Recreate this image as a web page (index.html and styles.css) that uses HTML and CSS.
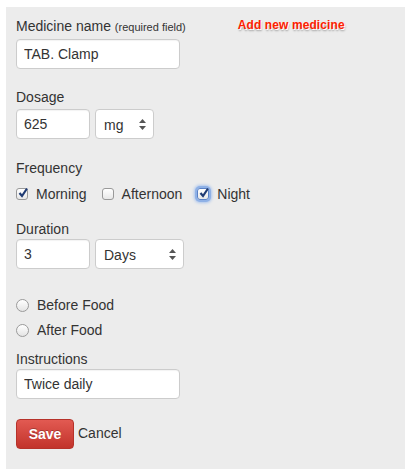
FILE: index.html
```html
<!DOCTYPE html>
<html lang="en">
<head>
    <meta charset="UTF-8">
    <meta name="viewport" content="width=device-width, initial-scale=1.0">
    <link rel="stylesheet" href="styles.css">
</head>
<body>
    <div class="panel">
        <div class="head-row">
            <label class="label" for="name">Medicine name <small>(required field)</small></label>
            <a class="add-link" href="#">Add new medicine</a>
        </div>
        <input type="text" id="name" class="field wide" value="TAB. Clamp">

        <label class="label gap" for="dose">Dosage</label>
        <div class="inline">
            <input type="text" id="dose" class="field short" value="625">
            <div class="select unit">mg<svg width="7" height="11" viewBox="0 0 7 11"><path d="M3.5 0 L7 4 H0 Z M3.5 11 L0 7 H7 Z" fill="#555"/></svg></div>
        </div>

        <div class="label gap-freq">Frequency</div>
        <div class="checks">
            <span class="check on"><span class="box"><svg width="12" height="12" viewBox="0 0 12 12"><path d="M2.5 6 L5 9 L10 1.5" stroke="#1f3b73" stroke-width="2.2" fill="none"/></svg></span>Morning</span>
            <span class="check"><span class="box"></span>Afternoon</span>
            <span class="check on focus"><span class="box"><svg width="12" height="12" viewBox="0 0 12 12"><path d="M2.5 6 L5 9 L10 1.5" stroke="#1f3b73" stroke-width="2.2" fill="none"/></svg></span>Night</span>
        </div>

        <label class="label gap-dur" for="dur">Duration</label>
        <div class="inline">
            <input type="text" id="dur" class="field short" value="3">
            <div class="select period">Days<svg width="7" height="11" viewBox="0 0 7 11"><path d="M3.5 0 L7 4 H0 Z M3.5 11 L0 7 H7 Z" fill="#555"/></svg></div>
        </div>

        <div class="radios">
            <span class="radio"><span class="dot"></span>Before Food</span>
            <span class="radio"><span class="dot"></span>After Food</span>
        </div>

        <label class="label tight" for="instr">Instructions</label>
        <input type="text" id="instr" class="field wide" value="Twice daily">

        <div class="actions">
            <button class="save">Save</button>
            <a class="cancel" href="#">Cancel</a>
        </div>
    </div>
</body>
</html>
```

FILE: styles.css
```css
body {
    margin: 0;
    background: #fff;
    font-family: 'Helvetica Neue', 'Liberation Sans', Arial, sans-serif;
    color: #333;
}
.panel {
    margin: 7px 0 0 6px;
    width: 389px;
    height: 453px;
    padding: 9px 0 0 10px;
    background: #ececec;
}
.head-row {
    display: flex;
    align-items: flex-start;
}
.label {
    display: block;
    font-size: 14px;
    line-height: 20px;
    margin-bottom: 2px;
}
.label small {
    font-size: 11px;
}
.gap {
    margin-top: 18px;
}
.gap-freq {
    margin-top: 19px;
    margin-bottom: 6px;
}
.gap-dur {
    margin-top: 15px;
    margin-bottom: 0;
}
.tight {
    margin-top: 9px;
    margin-bottom: 0;
}
.add-link {
    margin-left: 52px;
    margin-top: 2px;
    font-size: 12px;
    font-weight: bold;
    letter-spacing: 0.1px;
    color: #ff2200;
    text-decoration: none;
    text-shadow: 1px 1px 0 #fff, 1px 2px 2px rgba(0, 0, 0, 0.35);
}
.field {
    display: block;
    box-sizing: border-box;
    height: 30px;
    padding: 0 7px;
    border: 1px solid #ccc;
    border-radius: 4px;
    background: #fff;
    font-family: inherit;
    font-size: 14px;
    color: #333;
    box-shadow: inset 0 1px 1px rgba(0, 0, 0, 0.05);
}
.wide {
    width: 164px;
}
.short {
    width: 74px;
}
.inline {
    display: flex;
    gap: 5px;
}
.select {
    box-sizing: border-box;
    height: 30px;
    display: flex;
    align-items: center;
    justify-content: space-between;
    padding: 1px 7px 0 8px;
    border: 1px solid #ccc;
    border-radius: 4px;
    background: #fff;
    font-size: 14px;
}
.unit {
    width: 59px;
}
.period {
    width: 89px;
}
.checks {
    display: flex;
    height: 20px;
    align-items: center;
    font-size: 14px;
}
.check {
    display: flex;
    align-items: center;
    margin-right: 15px;
}
.box {
    box-sizing: border-box;
    width: 12px;
    height: 12px;
    margin-right: 8px;
    border: 1px solid #999;
    border-radius: 3px;
    background: linear-gradient(#fff, #e8e8e8);
    position: relative;
}
.box svg {
    position: absolute;
    left: 0;
    top: -2px;
}
.focus .box {
    box-shadow: 0 0 0 2px #8fb1e6, 0 0 3px 3px #a9c4ee;
    border-color: #5a82c7;
}
.radios {
    margin-top: 26px;
    font-size: 14px;
}
.radio {
    display: flex;
    align-items: center;
    height: 20px;
    margin-bottom: 5px;
}
.dot {
    box-sizing: border-box;
    width: 13px;
    height: 13px;
    margin-right: 8px;
    border: 1px solid #9a9a9a;
    border-radius: 50%;
    background: linear-gradient(#fff, #e4e4e4);
}
.actions {
    display: flex;
    align-items: center;
    margin-top: 20px;
}
.save {
    width: 58px;
    height: 30px;
    border: 1px solid #b6322a;
    border-radius: 4px;
    background: linear-gradient(#e25a52, #c2332b);
    color: #fff;
    font-family: inherit;
    font-size: 14px;
    font-weight: bold;
    text-shadow: 0 -1px 0 rgba(0, 0, 0, 0.25);
    cursor: pointer;
}
.cancel {
    margin-left: 4px;
    margin-top: -2px;
    font-size: 14px;
    color: #333;
    text-decoration: none;
}
```
